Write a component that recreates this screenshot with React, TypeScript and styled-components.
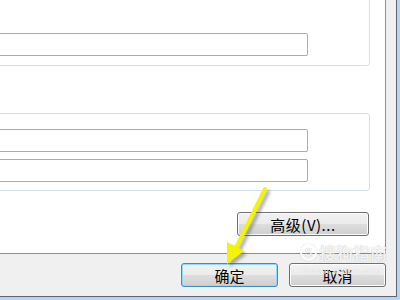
import React from "react";
import styled, { createGlobalStyle } from "styled-components";

const Global = createGlobalStyle`
  html, body { margin: 0; padding: 0; background: #b7d4f3; }
  body { font-family: "Noto Sans CJK SC", "Liberation Sans", sans-serif; }
`;

const Frame = styled.div`
  position: relative;
  width: 400px;
  height: 300px;
  background: #b7d4f3;
  overflow: hidden;
`;

const Inner = styled.div`
  width: 396px;
  height: 296px;
  background: #f0f0f0;
  border-right: 1px solid #5d6573;
  border-bottom: 1px solid #5d6573;
  display: flex;
  flex-direction: column;
  overflow: hidden;
`;

const Panel = styled.div`
  width: 370px;
  height: 253px;
  background: #ffffff;
  border-right: 1px solid #8b8e96;
  border-bottom: 1px solid #8b8e96;
  display: flex;
  flex-direction: column;
  align-items: flex-end;
  padding-right: 15px;
  box-sizing: content-box;
  margin-right: auto;
`;

const GroupBox = styled.div<{ $top: number; $height: number; $padTop: number }>`
  align-self: stretch;
  margin-left: -20px;
  margin-top: ${(p) => p.$top}px;
  height: ${(p) => p.$height}px;
  box-sizing: border-box;
  border: 1px solid #d5dfe5;
  border-radius: 3px;
  padding: ${(p) => p.$padTop}px 61px 0 0;
  display: flex;
  flex-direction: column;
  gap: 7px;
`;

const TextInput = styled.div`
  height: 23px;
  box-sizing: border-box;
  border: 1px solid #ababab;
  border-radius: 2px;
  background: #fff;
  margin-left: -20px;
`;

const Button = styled.div<{ $primary?: boolean; $width: number }>`
  width: ${(p) => p.$width}px;
  height: 24px;
  box-sizing: border-box;
  border: 1px solid ${(p) => (p.$primary ? "#3c8dc4" : "#707070")};
  border-radius: 3px;
  background: linear-gradient(#f2f2f2 0%, #ebebeb 48%, #dddddd 52%, #cfcfcf 100%);
  box-shadow: inset 0 0 0 1px ${(p) => (p.$primary ? "#8fdcf8" : "#fbfbfb")};
  display: flex;
  align-items: center;
  justify-content: center;
  font-family: "Noto Sans CJK SC", "Liberation Sans", sans-serif;
  font-size: 15px;
  line-height: 1;
  color: #000;
`;

const AdvButton = styled(Button)`
  margin-top: 21px;
  margin-right: 1px;
  letter-spacing: 0.5px;
`;

const ButtonRow = styled.div`
  display: flex;
  justify-content: flex-end;
  gap: 11px;
  padding: 9px 10px 0 0;
`;

const Watermark = styled.div`
  position: absolute;
  left: 300px;
  top: 244px;
  display: flex;
  flex-direction: column;
  align-items: flex-start;
  gap: 3px;
  pointer-events: none;
`;

const WmTop = styled.div`
  display: flex;
  align-items: center;
  gap: 2px;
  color: rgba(255, 255, 255, 0.85);
  text-shadow: 0 0 1px rgba(0, 0, 0, 0.3);
  font-size: 17px;
  line-height: 1;
  font-weight: 700;
`;

const WmLogo = styled.div`
  width: 17px;
  height: 17px;
  border-radius: 50%;
  border: 2px solid rgba(255, 255, 255, 0.85);
  box-sizing: border-box;
  display: flex;
  align-items: center;
  justify-content: center;
  font-size: 11px;
  font-family: "Liberation Sans", sans-serif;
  box-shadow: 0 0 1px rgba(0, 0, 0, 0.3);
`;

const WmUrl = styled.div`
  color: rgba(255, 255, 255, 0.75);
  text-shadow: 0 0 1px rgba(0, 0, 0, 0.15);
  font-family: "Liberation Sans", sans-serif;
  font-weight: 700;
  font-size: 8.5px;
  letter-spacing: 0.4px;
  line-height: 1;
  margin-top: 3px;
`;

const ArrowSvg = styled.svg`
  position: absolute;
  left: 0;
  top: 0;
  pointer-events: none;
`;

function Arrow() {
  return (
    <ArrowSvg width={400} height={300} viewBox="0 0 400 300">
      <defs>
        <filter id="blur" x="-20%" y="-20%" width="140%" height="140%">
          <feGaussianBlur stdDeviation="1.5" />
        </filter>
      </defs>
      <g transform="translate(3 3)" opacity="0.45" filter="url(#blur)">
        <line x1="265" y1="189" x2="237" y2="246" stroke="#555" strokeWidth="4" strokeLinecap="round" />
        <polygon points="227,242 244,251 227,264" fill="#555" />
      </g>
      <line x1="265" y1="189" x2="237" y2="246" stroke="#f4f400" strokeWidth="4" strokeLinecap="round" />
      <polygon points="227,242 244,251 227,264" fill="#f4f400" />
    </ArrowSvg>
  );
}

export default function App() {
  return (
    <>
      <Global />
      <Frame>
        <Inner>
          <Panel>
            <GroupBox $top={-20} $height={86} $padTop={52}>
              <TextInput />
            </GroupBox>
            <GroupBox $top={47} $height={78} $padTop={15}>
              <TextInput />
              <TextInput />
            </GroupBox>
            <AdvButton $width={132}>高级(V)...</AdvButton>
          </Panel>
          <ButtonRow>
            <Button $primary $width={97}>确定</Button>
            <Button $width={97}>取消</Button>
          </ButtonRow>
        </Inner>
        <Watermark>
          <WmTop>
            <WmLogo>S</WmLogo>
            <span>搜狗指南</span>
          </WmTop>
          <WmUrl>zhinan.sogou.com</WmUrl>
        </Watermark>
        <Arrow />
      </Frame>
    </>
  );
}
